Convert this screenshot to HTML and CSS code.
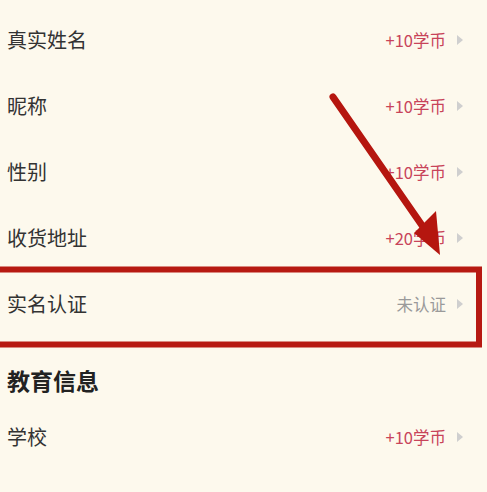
FILE: index.html
```html
<!DOCTYPE html>
<html lang="zh-CN">
<head>
  <meta charset="UTF-8">
  <meta name="viewport" content="width=device-width, initial-scale=1.0">
  <title>个人信息</title>
  <link rel="stylesheet" href="styles.css">
</head>
<body>
  <div class="info-list">
    <div class="row">
      <span class="label">真实姓名</span>
      <span class="value reward">+10学币<i class="chevron"></i></span>
    </div>
    <div class="row">
      <span class="label">昵称</span>
      <span class="value reward">+10学币<i class="chevron"></i></span>
    </div>
    <div class="row">
      <span class="label">性别</span>
      <span class="value reward">+10学币<i class="chevron"></i></span>
    </div>
    <div class="row">
      <span class="label">收货地址</span>
      <span class="value reward">+20学币<i class="chevron"></i></span>
    </div>
    <div class="row">
      <span class="label">实名认证</span>
      <span class="value muted">未认证<i class="chevron"></i></span>
    </div>
  </div>

  <h2 class="section-title">教育信息</h2>

  <div class="info-list">
    <div class="row">
      <span class="label">学校</span>
      <span class="value reward">+10学币<i class="chevron"></i></span>
    </div>
  </div>

  <!-- annotation drawn over the screenshot -->
  <svg class="markup" width="487" height="492" viewBox="0 0 487 492">
    <rect x="-3" y="269.5" width="482" height="75" fill="none" stroke="#b71a12" stroke-width="6"/>
    <line x1="333" y1="97" x2="428" y2="234" stroke="#b5160f" stroke-width="7" stroke-linecap="round"/>
    <polygon points="436,211 440,255 414,233" fill="#b5160f"/>
  </svg>
</body>
</html>
```

FILE: styles.css
```css
body {
  margin: 0;
  padding: 0;
  position: relative;
  background: #fdf9ed;
  font-family: "Noto Sans CJK SC", "Noto Sans", sans-serif;
  color: #333;
  overflow: hidden;
}

.info-list {
  padding-top: 7px;
}

.row {
  height: 66px;
  display: flex;
  align-items: center;
  justify-content: space-between;
  padding: 0 24px 0 7px;
}

.label {
  font-size: 20px;
  line-height: 1;
}

.value {
  display: flex;
  align-items: center;
  font-size: 16.5px;
  line-height: 1;
}

.reward {
  color: #c8445a;
}

.muted {
  color: #9a9a9a;
}

.chevron {
  display: inline-block;
  width: 0;
  height: 0;
  margin-left: 11px;
  border-top: 5px solid transparent;
  border-bottom: 5px solid transparent;
  border-left: 6px solid #cfcfcf;
}

.section-title {
  margin: 0;
  padding: 28px 7px 9px;
  font-size: 23px;
  line-height: 30px;
  font-weight: bold;
  color: #222;
}

.section-title + .info-list {
  padding-top: 0;
}

.markup {
  position: absolute;
  top: 0;
  left: 0;
  pointer-events: none;
}
```
